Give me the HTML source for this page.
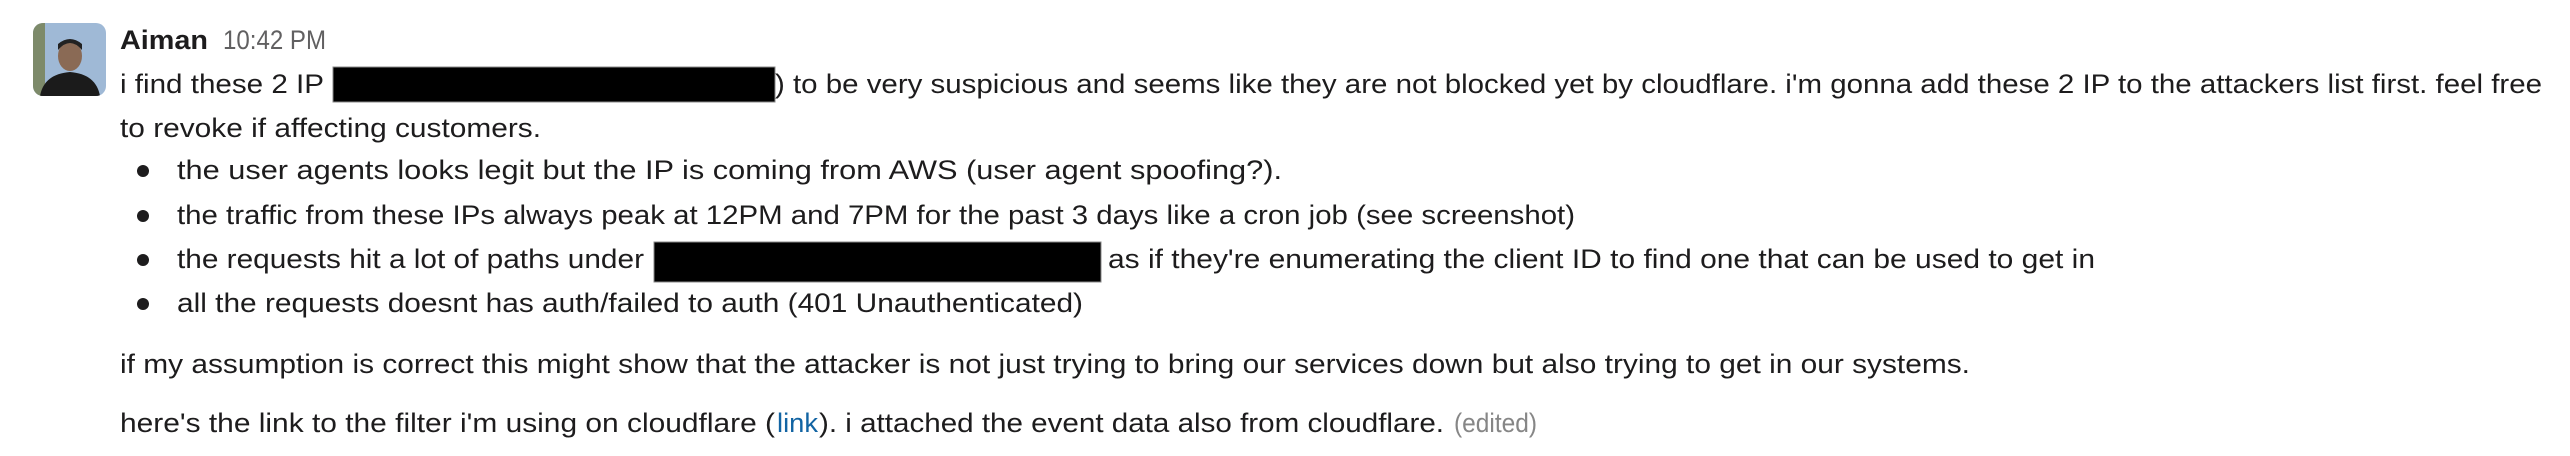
<!DOCTYPE html>
<html><head><meta charset="utf-8"><style>
html,body{margin:0;padding:0;background:#fff;width:2570px;height:456px;overflow:hidden}
svg{display:block}
text{font-family:"Liberation Sans",sans-serif;font-size:27px;fill:#1d1c1d}
</style></head><body>
<svg width="2570" height="456" viewBox="0 0 2570 456" xmlns="http://www.w3.org/2000/svg">
<defs><clipPath id="av"><rect x="33" y="23" width="73" height="73" rx="10"/></clipPath></defs>
<g clip-path="url(#av)">
<rect x="33" y="23" width="73" height="73" fill="#9fb9d6"/>
<rect x="33" y="23" width="12" height="73" fill="#7d8a6a"/>
<ellipse cx="70" cy="56" rx="12" ry="15" fill="#8a6a55"/>
<path d="M58 50 Q70 36 82 50 L82 44 Q70 34 58 44Z" fill="#222"/>
<path d="M40 96 Q44 74 70 72 Q96 74 100 96Z" fill="#1b1b1b"/>
</g>
<text x="120" y="49" font-weight="bold" font-size="28" textLength="88" lengthAdjust="spacingAndGlyphs">Aiman</text>
<text x="223" y="49" font-size="21" style="fill:#616061" textLength="103" lengthAdjust="spacingAndGlyphs">10:42 PM</text>
<text x="120" y="93" textLength="204" lengthAdjust="spacingAndGlyphs">i find these 2 IP</text>
<rect x="333" y="67" width="442" height="35" fill="#000" stroke="#888" stroke-width="1"/>
<text x="775" y="93" textLength="1767" lengthAdjust="spacingAndGlyphs">) to be very suspicious and seems like they are not blocked yet by cloudflare. i'm gonna add these 2 IP to the attackers list first. feel free</text>
<text x="120" y="137" textLength="421" lengthAdjust="spacingAndGlyphs">to revoke if affecting customers.</text>
<circle cx="143" cy="171" r="6" fill="#1d1c1d"/>
<circle cx="143" cy="216" r="6" fill="#1d1c1d"/>
<circle cx="143" cy="260" r="6" fill="#1d1c1d"/>
<circle cx="143" cy="304" r="6" fill="#1d1c1d"/>
<text x="177" y="179" textLength="1105" lengthAdjust="spacingAndGlyphs">the user agents looks legit but the IP is coming from AWS (user agent spoofing?).</text>
<text x="177" y="224" textLength="1398" lengthAdjust="spacingAndGlyphs">the traffic from these IPs always peak at 12PM and 7PM for the past 3 days like a cron job (see screenshot)</text>
<text x="177" y="268" textLength="467" lengthAdjust="spacingAndGlyphs">the requests hit a lot of paths under</text>
<rect x="654" y="242" width="447" height="40" fill="#000" stroke="#888" stroke-width="1"/>
<text x="1108" y="268" textLength="987" lengthAdjust="spacingAndGlyphs">as if they're enumerating the client ID to find one that can be used to get in</text>
<text x="177" y="312" textLength="906" lengthAdjust="spacingAndGlyphs">all the requests doesnt has auth/failed to auth (401 Unauthenticated)</text>
<text x="120" y="373" textLength="1850" lengthAdjust="spacingAndGlyphs">if my assumption is correct this might show that the attacker is not just trying to bring our services down but also trying to get in our systems.</text>
<text x="120" y="432" textLength="655" lengthAdjust="spacingAndGlyphs">here's the link to the filter i'm using on cloudflare (</text>
<text x="777" y="432" style="fill:#1264a3" textLength="41" lengthAdjust="spacingAndGlyphs">link</text>
<text x="819" y="432" textLength="625" lengthAdjust="spacingAndGlyphs">). i attached the event data also from cloudflare.</text>
<text x="1454" y="432" font-size="22" style="fill:#868686" textLength="83" lengthAdjust="spacingAndGlyphs">(edited)</text>
</svg>
</body></html>
